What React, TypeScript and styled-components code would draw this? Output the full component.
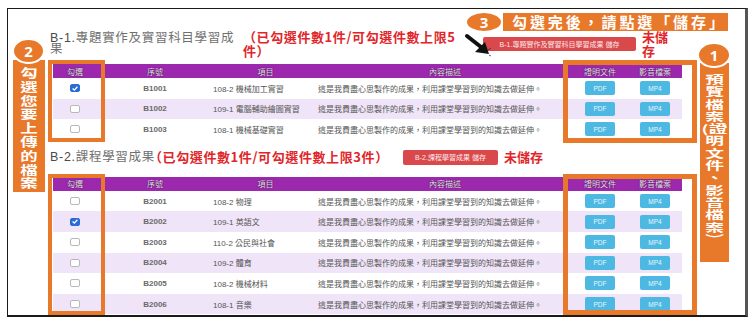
import styled, { createGlobalStyle } from 'styled-components';

const ORANGE = '#e8792b';
const RED = '#e0262b';
const PURPLE = '#9c28ad';
const COLS = '44px 116px 105px 254px 56px 54px';

const GlobalStyle = createGlobalStyle`
  html, body { margin: 0; padding: 0; background: #fff; }
  body { font-family: "Liberation Sans", "Noto Sans CJK TC", sans-serif; }
`;

const Frame = styled.div`
  position: relative;
  box-sizing: border-box;
  margin: 8px 0 0 7px;
  width: 741px;
  height: 309px;
  border: 1px solid #1a1a1a;
  border-right: 3px solid #555;
  border-bottom-width: 2px;
  padding: 21px 0 0 45px;
`;

const SectionHead = styled.div<{ $h: number; $mt?: number; $mb: number }>`
  display: flex;
  align-items: center;
  margin: ${(p) => p.$mt ?? 0}px 0 ${(p) => p.$mb}px -3px;
  height: ${(p) => p.$h}px;
`;

const Title = styled.div<{ $w: number }>`
  flex: none;
  width: ${(p) => p.$w}px;
  font-size: 12.5px;
  line-height: 11px;
  letter-spacing: 0.7px;
  color: #707070;
  white-space: nowrap;
  b {
    font-weight: normal;
    color: #4a4a4a;
  }
`;

const Count = styled.div<{ $w: number }>`
  flex: none;
  width: ${(p) => p.$w}px;
  font-family: "Noto Sans CJK TC", sans-serif;
  font-size: 13px;
  font-weight: 700;
  line-height: 14px;
  letter-spacing: 0.6px;
  color: ${RED};
  white-space: nowrap;
`;

const SaveButton = styled.div<{ $w: number; $h: number }>`
  flex: none;
  display: flex;
  align-items: center;
  justify-content: center;
  width: ${(p) => p.$w}px;
  height: ${(p) => p.$h}px;
  border-radius: 2px;
  background: #d9484b;
  color: #fbe9e9;
  font-size: 7px;
  white-space: nowrap;
`;

const Unsaved = styled.div`
  flex: none;
  margin-left: 6px;
  font-family: "Noto Sans CJK TC", sans-serif;
  font-size: 13px;
  font-weight: 700;
  line-height: 14px;
  color: ${RED};
`;

const Table = styled.div`
  width: 629px;
`;

const HeadRow = styled.div`
  display: grid;
  grid-template-columns: ${COLS};
  align-items: center;
  height: 14px;
  background: ${PURPLE};
`;

const HeadCell = styled.div`
  text-align: center;
  font-size: 8px;
  color: #eee2f2;
  text-shadow: 0 0 1px #3c1044, 0 0 1px #3c1044;
`;

const Row = styled.div<{ $shade: boolean }>`
  display: grid;
  grid-template-columns: ${COLS};
  align-items: center;
  height: 20.6px;
  background: ${(p) => (p.$shade ? '#f0e4f8' : '#fff')};
  font-size: 8px;
  color: #555;
`;

const Center = styled.div`
  display: flex;
  justify-content: center;
`;

const Seq = styled.div`
  text-align: center;
  font-weight: 700;
  color: #6a6a6a;
`;

const Text = styled.div`
  white-space: nowrap;
`;

const Box = styled.div<{ $on: boolean }>`
  box-sizing: border-box;
  width: 10px;
  height: 8px;
  border-radius: 2px;
  border: 1px solid ${(p) => (p.$on ? '#2a6bd6' : '#b9b9b9')};
  background: ${(p) => (p.$on ? '#2a6bd6' : '#fff')};
  display: flex;
  align-items: center;
  justify-content: center;
`;

const FileButton = styled.div`
  width: 30px;
  height: 14px;
  border-radius: 2px;
  background: #4db8e2;
  color: #e8f6fc;
  font-size: 6.5px;
  display: flex;
  align-items: center;
  justify-content: center;
`;

const Outline = styled.div<{ $x: number; $y: number; $w: number; $h: number; $b: number }>`
  position: absolute;
  box-sizing: border-box;
  left: ${(p) => p.$x}px;
  top: ${(p) => p.$y}px;
  width: ${(p) => p.$w}px;
  height: ${(p) => p.$h}px;
  border: ${(p) => p.$b}px solid ${ORANGE};
  pointer-events: none;
`;

const SideBar = styled.div<{ $x: number; $y: number; $w: number; $h: number }>`
  position: absolute;
  left: ${(p) => p.$x}px;
  top: ${(p) => p.$y}px;
  width: ${(p) => p.$w}px;
  height: ${(p) => p.$h}px;
  background: ${ORANGE};
`;

const SideText = styled.div<{ $size: number; $lh: number; $sx: number; $pt: number }>`
  display: flex;
  flex-direction: column;
  align-items: center;
  padding-top: ${(p) => p.$pt}px;
  font-family: "Noto Sans CJK TC", sans-serif;
  font-weight: 700;
  font-size: ${(p) => p.$size}px;
  color: #fff;
  transform: scaleX(${(p) => p.$sx});
  white-space: nowrap;
  span {
    display: block;
    height: ${(p) => p.$lh}px;
    line-height: ${(p) => p.$lh}px;
  }
`;

const Badge = styled.div<{ $x: number; $y: number; $w: number; $h: number }>`
  position: absolute;
  z-index: 2;
  box-sizing: border-box;
  left: ${(p) => p.$x}px;
  top: ${(p) => p.$y}px;
  width: ${(p) => p.$w}px;
  height: ${(p) => p.$h}px;
  border-radius: 50%;
  border: 2px solid #fff;
  background: ${ORANGE};
  color: #fff;
  font-family: "Noto Sans", sans-serif;
  font-weight: 700;
  font-size: 15px;
  display: flex;
  align-items: center;
  justify-content: center;
`;

const Banner = styled.div`
  position: absolute;
  left: 495px;
  top: 4px;
  width: 225px;
  height: 18px;
  box-sizing: border-box;
  padding-left: 9px;
  background: ${ORANGE};
  color: #fff;
  font-family: "Noto Sans CJK TC", sans-serif;
  font-weight: 700;
  font-size: 15px;
  line-height: 18px;
  letter-spacing: 2.9px;
  white-space: nowrap;
`;

const Pointer = styled.svg`
  position: absolute;
  left: 456px;
  top: 24px;
`;

type Item = { id: string; name: string; on?: boolean };

const projects: Item[] = [
  { id: 'B1001', name: '108-2 機械加工實習', on: true },
  { id: 'B1002', name: '109-1 電腦輔助繪圖實習' },
  { id: 'B1003', name: '108-1 機械基礎實習' },
];

const courses: Item[] = [
  { id: 'B2001', name: '108-2 物理' },
  { id: 'B2002', name: '109-1 英語文', on: true },
  { id: 'B2003', name: '110-2 公民與社會' },
  { id: 'B2004', name: '109-2 體育' },
  { id: 'B2005', name: '108-2 機械材料' },
  { id: 'B2006', name: '108-1 音樂' },
];

const DESC = '這是我費盡心思製作的成果，利用課堂學習到的知識去做延伸。';

function Check({ on }: { on: boolean }) {
  return (
    <Box $on={on}>
      {on && (
        <svg width="6" height="5" viewBox="0 0 6 5">
          <path d="M0.6 2.6 L2.3 4.1 L5.4 0.8" fill="none" stroke="#fff" strokeWidth="1.3" />
        </svg>
      )}
    </Box>
  );
}

function Grid({ rows }: { rows: Item[] }) {
  return (
    <Table>
      <HeadRow>
        <HeadCell>勾選</HeadCell>
        <HeadCell>序號</HeadCell>
        <HeadCell>項目</HeadCell>
        <HeadCell>內容描述</HeadCell>
        <HeadCell>證明文件</HeadCell>
        <HeadCell>影音檔案</HeadCell>
      </HeadRow>
      {rows.map((r, i) => (
        <Row key={r.id} $shade={i % 2 === 1}>
          <Center>
            <Check on={!!r.on} />
          </Center>
          <Seq>{r.id}</Seq>
          <Text>{r.name}</Text>
          <Text>{DESC}</Text>
          <Center>
            <FileButton>PDF</FileButton>
          </Center>
          <Center>
            <FileButton>MP4</FileButton>
          </Center>
        </Row>
      ))}
    </Table>
  );
}

const leftText = ['勾', '選', '您', '要', '上', '傳', '的', '檔', '案'];
const rightText = ['預', '覽', '檔', '案', '(證', '明', '文', '件', '、', '影', '音', '檔', '案', '︶'];

export default function App() {
  return (
    <>
      <GlobalStyle />
      <Frame>
        <SectionHead $h={28} $mb={6}>
          <Title $w={193}>
            <b>B-1.</b>專題實作及實習科目學習成
            <br />果
          </Title>
          <Count $w={240}>
            （已勾選件數1件/可勾選件數上限5
            <br />件）
          </Count>
          <SaveButton $w={153} $h={14}>B-1.專題實作及實習科目學習成果 儲存</SaveButton>
          <Unsaved>
            未儲
            <br />存
          </Unsaved>
        </SectionHead>
        <Grid rows={projects} />

        <SectionHead $h={19} $mt={8} $mb={10}>
          <Title $w={99}>
            <b>B-2.</b>課程學習成果
          </Title>
          <Count $w={254}>（已勾選件數1件/可勾選件數上限3件）</Count>
          <SaveButton $w={95} $h={15}>B-2.課程學習成果 儲存</SaveButton>
          <Unsaved>未儲存</Unsaved>
        </SectionHead>
        <Grid rows={courses} />

        <Outline $x={40} $y={51} $w={57} $h={82} $b={4} />
        <Outline $x={40} $y={165} $w={57} $h={141} $b={4} />
        <Outline $x={555} $y={51} $w={134} $h={83} $b={5} />
        <Outline $x={555} $y={165} $w={134} $h={141} $b={5} />

        <SideBar $x={5} $y={51} $w={32} $h={132}>
          <SideText $size={12} $lh={13.8} $sx={1.45} $pt={6}>
            {leftText.map((c, i) => (
              <span key={i}>{c}</span>
            ))}
          </SideText>
        </SideBar>
        <Badge $x={4} $y={29} $w={33} $h={26}>2</Badge>

        <SideBar $x={692} $y={54} $w={29} $h={199}>
          <SideText $size={11} $lh={12.3} $sx={1.7} $pt={10}>
            {rightText.map((c, i) => (
              <span key={i}>{c}</span>
            ))}
          </SideText>
        </SideBar>
        <Badge $x={689} $y={33} $w={34} $h={26}>1</Badge>

        <Banner>勾選完後，請點選「儲存」</Banner>
        <Badge $x={457} $y={2} $w={38} $h={22}>3</Badge>
        <Pointer width="28" height="24" viewBox="0 0 28 24">
          <path d="M3 3 L17 14" stroke="#111" strokeWidth="4" strokeLinecap="round" />
          <polygon points="25,21 11,19 21,9" fill="#111" />
          <path d="M24 17 L27 15 M25 22 L27 23" stroke="#333" strokeWidth="0.8" />
        </Pointer>
      </Frame>
    </>
  );
}
